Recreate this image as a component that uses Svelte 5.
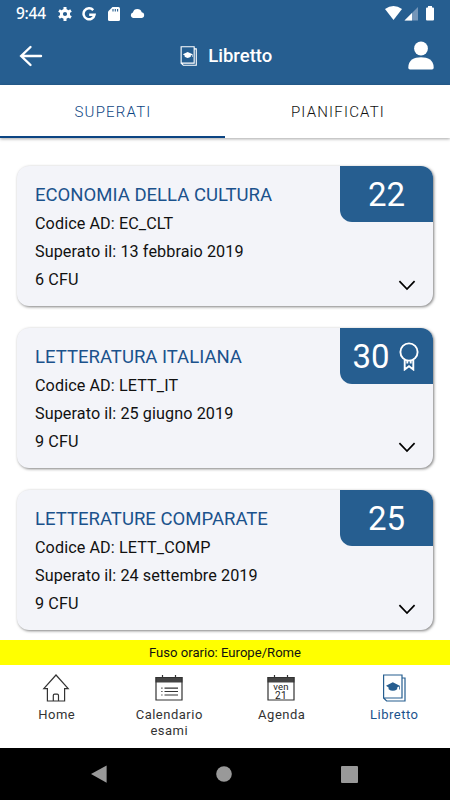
<script lang="ts">
  let activeTab = $state('SUPERATI');
  let activePage = $state('Libretto');

  const tabs = ['SUPERATI', 'PIANIFICATI'];

  const exams = [
    { name: 'ECONOMIA DELLA CULTURA', code: 'EC_CLT', date: '13 febbraio 2019', cfu: 6, grade: 22, honours: false },
    { name: 'LETTERATURA ITALIANA', code: 'LETT_IT', date: '25 giugno 2019', cfu: 9, grade: 30, honours: true },
    { name: 'LETTERATURE COMPARATE', code: 'LETT_COMP', date: '24 settembre 2019', cfu: 9, grade: 25, honours: false }
  ];

  const pages = ['Home', 'Calendario esami', 'Agenda', 'Libretto'];
</script>

{#snippet book()}
  <path d="M1.6 1H20V24H1.6ZM1.6 24L4.6 27H23V4H20" />
  <path class="solid" d="M4 11.7L10.8 8.2L17.8 11.7V15.5H17V12.5L15.2 13.4V15.2Q10.8 18.2 6.6 15.2V13.4Z" />
{/snippet}

<div class="screen">
  <header>
    <div class="statusBar">
      <span class="clock">9:44</span>
      <svg class="gear" width="14" height="14" viewBox="0 0 14 14">
        <circle cx="7" cy="7" r="3.6" fill="none" stroke="#fff" stroke-width="3" />
        <path d="M7 .1V3 M7 11V13.9 M1 3.5L3.5 5 M10.5 9L13 10.5 M13 3.5L10.5 5 M3.5 9L1 10.5" stroke="#fff" stroke-width="3" />
      </svg>
      <svg class="google" width="14" height="14" viewBox="0 0 14 14">
        <path d="M11.2 3.1A5.5 5.5 0 1 0 12.5 7.7H7.2" fill="none" stroke="#fff" stroke-width="2.5" />
      </svg>
      <svg class="sdCard" width="12" height="14" viewBox="0 0 12 14">
        <path d="M4.5 0H10.5Q12 0 12 1.5V12.5Q12 14 10.5 14H1.5Q0 14 0 12.5V4.5Z" fill="#fff" />
        <path d="M5 2V4.5M7.3 2V4.5M9.6 2V4.5" stroke="#265e90" stroke-width="1.1" />
      </svg>
      <svg class="cloud" width="15" height="9" viewBox="0 0 15 9">
        <path d="M3 9A2.9 2.9 0 0 1 2.9 3.4A4.6 4.6 0 0 1 11.7 3.3A2.9 2.9 0 0 1 12 9Z" fill="#fff" />
      </svg>
      <svg class="signals" width="50" height="15" viewBox="0 0 50 15">
        <path d="M0 3Q8.5-3 17 3L8.5 14Z" fill="#fff" />
        <path d="M19.5 14.5L33 1V14.5Z" fill="#7596b9" />
        <path d="M19.5 14.5L27 7V14.5Z" fill="#fff" />
        <path d="M43 0H47V1.4H48Q49 1.4 49 2.4V13.5Q49 14.5 48 14.5H42Q41 14.5 41 13.5V2.4Q41 1.4 42 1.4H43Z" fill="#fff" />
      </svg>
    </div>
    <div class="toolbar">
      <svg width="24" height="22" viewBox="0 0 24 22">
        <path d="M11.5 2L2.2 11L11.5 20M2.5 11H22" fill="none" stroke="#fff" stroke-width="2.4" stroke-linecap="round" />
      </svg>
      <div class="heading">
        <svg class="book" width="17" height="20" viewBox="0 0 24 28">{@render book()}</svg>
        <h1>Libretto</h1>
      </div>
      <svg width="26" height="29" viewBox="0 0 26 29">
        <circle cx="13" cy="7.5" r="6.9" fill="#fff" />
        <path d="M.3 26.7C.3 19 6 16.3 13 16.3S25.7 19 25.7 26.7Q25.7 28.4 24 28.4H2Q.3 28.4 .3 26.7Z" fill="#fff" />
      </svg>
    </div>
  </header>

  <div class="tabs">
    {#each tabs as tab}
      <button class="tab" class:selected={tab === activeTab} onclick={() => (activeTab = tab)}>{tab}</button>
    {/each}
  </div>

  <main>
    {#each exams as exam}
      <article class="card">
        <div class="details">
          <h2>{exam.name}</h2>
          <p>Codice AD: {exam.code}</p>
          <p>Superato il: {exam.date}</p>
          <p>{exam.cfu} CFU</p>
        </div>
        <div class="side">
          <div class="grade">
            <span>{exam.grade}</span>
            {#if exam.honours}
              <svg width="20" height="29" viewBox="0 0 20 29">
                <circle cx="10" cy="10" r="8.6" />
                <path d="M5.7 17.5V27.5L10 24.3L14.3 27.5V17.5M8.3 18.8V21.5M11.7 18.8V21.5" />
              </svg>
            {/if}
          </div>
          <svg class="chevron" width="18" height="11" viewBox="0 0 18 11">
            <path d="M1.4 1.2L9 9L16.6 1.2" fill="none" stroke="#000" stroke-width="1.7" />
          </svg>
        </div>
      </article>
    {/each}
  </main>

  <div class="timezone">Fuso orario: Europe/Rome</div>

  <nav>
    {#each pages as page}
      <button class="navItem" class:current={page === activePage} onclick={() => (activePage = page)}>
        <svg width="28" height="28" viewBox="0 0 28 28">
          {#if page === 'Home'}
            <path d="M14 1L1.8 14.6H5.4V27H22.6V14.6H26.2ZM11.3 27V21.5Q11.3 20.2 12.6 20.2H15.2Q16.5 20.2 16.5 21.5V27" />
          {:else if page === 'Libretto'}
            <g transform="translate(2 0)">{@render book()}</g>
          {:else}
            <path class="solid" d="M.5 3H27.5V8.5H.5Z" />
            <path d="M1 3.5H27V26H1ZM7.5 1V4M20.5 1V4" />
            {#if page === 'Agenda'}
              <text x="14" y="15.5" font-size="9.5">ven</text>
              <text x="14" y="25.3" font-size="10">21</text>
            {:else}
              <path d="M9.5 14.1H23M9.5 17.5H23M9.5 21H23M6.3 14.1H7.5M6.3 17.5H7.5M6.3 21H7.5" />
            {/if}
          {/if}
        </svg>
        <span>{page}</span>
      </button>
    {/each}
  </nav>

  <div class="systemBar">
    <svg width="16" height="18" viewBox="0 0 16 18"><path d="M15.6 .5V17.8L0 9Z" /></svg>
    <svg width="16" height="16" viewBox="0 0 16 16"><circle cx="8" cy="8" r="7.8" /></svg>
    <svg width="17" height="17" viewBox="0 0 17 17"><rect width="17" height="17" rx="1" /></svg>
  </div>
</div>

<style>
  :global(body) {
    margin: 0;
  }

  .screen {
    display: flex;
    flex-direction: column;
    width: 450px;
    height: 800px;
    overflow: hidden;
    background-color: #fff;
    font-family: Roboto, sans-serif;
    color: #111;
  }

  svg {
    display: block;
    flex: none;
  }

  button {
    border: none;
    padding: 0;
    background: none;
    font: inherit;
    color: inherit;
  }

  h1, h2, p {
    margin: 0;
    font-weight: 400;
  }

  header {
    flex: none;
    height: 85px;
    background-color: #265e90;
    color: #fff;
  }

  .statusBar {
    display: flex;
    align-items: center;
    height: 27px;
    padding: 0 15px 0 16px;
  }

  .clock {
    width: 42px;
    font-family: "Noto Sans", sans-serif;
    font-size: 15.4px;
    font-weight: 500;
    line-height: 20px;
    letter-spacing: -0.2px;
  }

  .google {
    margin-left: 10px;
  }

  .sdCard {
    margin-left: 11.5px;
  }

  .cloud {
    margin-left: 10px;
  }

  .signals {
    margin-left: auto;
  }

  .toolbar {
    display: flex;
    align-items: center;
    justify-content: space-between;
    height: 57px;
    padding: 0 16.5px 0 19px;
  }

  .heading {
    display: flex;
    align-items: center;
    gap: 11px;
    padding-left: 2px;
  }

  h1 {
    font-size: 18.5px;
    font-weight: 500;
    line-height: 22px;
  }

  .book {
    fill: none;
    stroke: #fff;
    stroke-width: 1.6;
  }

  .book :global(.solid) {
    fill: #fff;
    stroke: none;
  }

  .tabs {
    display: flex;
    flex: none;
    height: 53px;
    box-shadow: 0 1px 3px rgba(0, 0, 0, 0.35);
  }

  .tab {
    flex: 1;
    box-sizing: border-box;
    border-bottom: 2px solid transparent;
    padding: 2px 0 0 1px;
    font-size: 15px;
    font-weight: 300;
    letter-spacing: 1.2px;
    color: #111;
  }

  .tab.selected {
    border-color: #0c4583;
    color: #0c4583;
  }

  main {
    display: flex;
    flex: none;
    flex-direction: column;
    gap: 22px;
    box-sizing: border-box;
    height: 502px;
    padding: 28px 17px 10px 17px;
  }

  .card {
    display: flex;
    justify-content: space-between;
    height: 140px;
    border-radius: 12px;
    overflow: hidden;
    background-color: #f3f4f9;
    box-shadow: 1px 1px 3px rgba(0, 0, 0, 0.5);
  }

  .details {
    padding: 14px 0 0 18px;
  }

  .details p {
    font-size: 16.2px;
    line-height: 27.8px;
    letter-spacing: 0.08px;
  }

  h2 {
    font-size: 18.55px;
    line-height: 30px;
    color: #1b528c;
  }

  .side {
    display: flex;
    flex-direction: column;
    justify-content: space-between;
    align-items: flex-end;
  }

  .grade {
    display: flex;
    align-items: center;
    justify-content: center;
    gap: 9px;
    width: 93px;
    height: 56px;
    border-bottom-left-radius: 12px;
    background-color: #265e90;
    color: #fff;
    font-size: 33px;
  }

  .grade svg {
    margin-right: 2px;
    fill: none;
    stroke: #fff;
    stroke-width: 1.9;
  }

  .chevron {
    margin: 0 17px 15px 0;
  }

  .timezone {
    flex: none;
    height: 25px;
    background-color: #ff0;
    font-size: 13.1px;
    line-height: 25px;
    text-align: center;
  }

  nav {
    display: grid;
    flex: none;
    grid-template-columns: repeat(4, 1fr);
    height: 83px;
  }

  .navItem {
    display: flex;
    flex-direction: column;
    align-items: center;
    padding-top: 9px;
    font-size: 13px;
    line-height: 15.5px;
    letter-spacing: 0.5px;
    color: #333;
  }

  .navItem span {
    width: 80px;
    margin-top: 5px;
    padding-left: 1px;
  }

  .navItem svg {
    fill: none;
    stroke: #333;
    stroke-width: 1.2;
  }

  .navItem .solid {
    fill: #444;
    stroke: none;
  }

  .navItem text {
    fill: #222;
    stroke: none;
    text-anchor: middle;
    letter-spacing: 0.3px;
  }

  .navItem.current {
    color: #1b528c;
  }

  .navItem.current svg {
    stroke: #265e90;
  }

  .navItem.current svg :global(.solid) {
    fill: #265e90;
    stroke: none;
  }

  .systemBar {
    display: flex;
    flex: 1;
    align-items: center;
    justify-content: space-between;
    padding: 0 92px 0 91px;
    background-color: #000;
    fill: #999;
  }
</style>
